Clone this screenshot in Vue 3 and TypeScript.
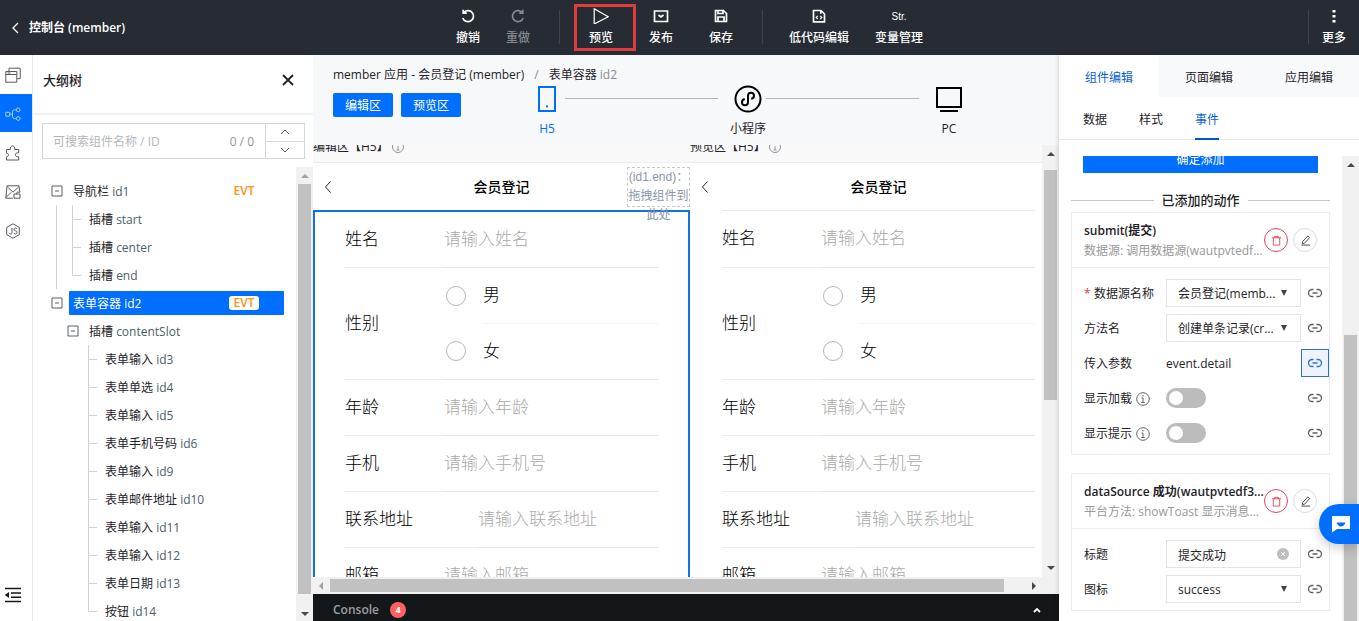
<script setup lang="ts">
import { ref } from 'vue'

interface TreeRow {
  name: string
  id: string
  level: number
  open?: boolean
  last?: boolean
  line?: boolean
  evt?: boolean
}

interface Field {
  key: string
  label: string
  hint: string
  options?: string[]
}

const selectedNode = ref('id2')
const query = ref('')
const toastTitle = ref('提交成功')
const showLoading = ref(false)
const showTip = ref(false)

const tree: TreeRow[] = [
  { name: '导航栏', id: 'id1', level: 0, open: true, evt: true },
  { name: '插槽', id: 'start', level: 1, line: true },
  { name: '插槽', id: 'center', level: 1, line: true },
  { name: '插槽', id: 'end', level: 1, line: true, last: true },
  { name: '表单容器', id: 'id2', level: 0, open: true, evt: true },
  { name: '插槽', id: 'contentSlot', level: 1, open: true },
  { name: '表单输入', id: 'id3', level: 2 },
  { name: '表单单选', id: 'id4', level: 2 },
  { name: '表单输入', id: 'id5', level: 2 },
  { name: '表单手机号码', id: 'id6', level: 2 },
  { name: '表单输入', id: 'id9', level: 2 },
  { name: '表单邮件地址', id: 'id10', level: 2 },
  { name: '表单输入', id: 'id11', level: 2 },
  { name: '表单输入', id: 'id12', level: 2 },
  { name: '表单日期', id: 'id13', level: 2 },
  { name: '按钮', id: 'id14', level: 2, last: true },
]

const fields: Field[] = [
  { key: 'name', label: '姓名', hint: '请输入姓名' },
  { key: 'gender', label: '性别', hint: '', options: ['男', '女'] },
  { key: 'age', label: '年龄', hint: '请输入年龄' },
  { key: 'phone', label: '手机', hint: '请输入手机号' },
  { key: 'address', label: '联系地址', hint: '请输入联系地址' },
  { key: 'mail', label: '邮箱', hint: '请输入邮箱' },
]

const panes = [
  { key: 'edit', title: '编辑区【H5】' },
  { key: 'preview', title: '预览区【H5】' },
]
</script>

<template>
  <div class="app">
    <header class="topbar">
      <a class="back" href="#">
        <svg width="8" height="12" viewBox="0 0 8 12"><path d="M7 1 2 6l5 5" /></svg>
        <span>控制台 (member)</span>
      </a>
      <nav class="tools">
        <button class="tool">
          <svg viewBox="0 0 16 16"><path d="M4.200 4.200A5.500 5.500 0 1 1 2.800 10M3.200 1.800v3.400h3.600" /></svg>
          <span>撤销</span>
        </button>
        <button class="tool dim">
          <svg viewBox="0 0 16 16"><path d="M11.800 4.200A5.500 5.500 0 1 0 13.200 10M12.800 1.800v3.400H9.200" /></svg>
          <span>重做</span>
        </button>
        <i class="sep sep-a"></i>
        <button class="tool wide marked">
          <svg class="play" viewBox="0 0 16 16"><path d="M1.200.8 15.200 8.800 1.200 16z" /></svg>
          <span>预览</span>
        </button>
        <button class="tool wide">
          <svg viewBox="0 0 16 16"><path d="M1.500 3h13v10.500h-13zM5.500 7 8 9l2.500-2" /></svg>
          <span>发布</span>
        </button>
        <button class="tool wide">
          <svg viewBox="0 0 16 16"><path d="M2.500 2.500h8l3 3v8h-11zM5 2.500v3h5v-3M5 13.500V9h6v4.500" /></svg>
          <span>保存</span>
        </button>
        <i class="sep sep-b"></i>
        <button class="tool">
          <svg viewBox="0 0 16 16"><path d="M2.500 2.500h7.500l3.500 3.500v7.800h-11zM9.800 2.500v3.300" /><path class="fine" d="M6.800 7.800 5.200 9.400 6.800 11M9.200 7.800l1.600 1.600L9.200 11" /></svg>
          <span>低代码编辑</span>
        </button>
        <button class="tool">
          <b class="str">Str.</b>
          <span>变量管理</span>
        </button>
      </nav>
      <div class="more-zone">
        <i class="sep"></i>
        <button class="tool">
          <svg class="dots" viewBox="0 0 16 16"><path d="M6.500 2h3v2.500h-3zM6.500 7h3v2.500h-3zM6.500 12h3v2.500h-3z" /></svg>
          <span>更多</span>
        </button>
      </div>
    </header>

    <div class="body">
      <aside class="rail">
        <button aria-label="页面">
          <svg viewBox="0 0 16 16"><path d="M.8 4.500h11v10.700H.8zM.8 7.500h11M2.500 6h3M4 4V1.200h11.200v10.500h-3" /></svg>
        </button>
        <button class="on" aria-label="大纲树">
          <svg viewBox="0 0 16 16"><path d="M.8 6.300h3.900v3.900H.8zM4.700 8.200h2.800M11.300 3.800H9.500q-2 0-2 2v4.800q0 2 2 2h1.800" /><circle cx="13.200" cy="3.800" r="1.900" /><circle cx="13.200" cy="12.500" r="1.900" /></svg>
        </button>
        <button aria-label="组件">
          <svg viewBox="0 0 16 16"><path d="M1.500 4.500h3.800C4.900 2.400 6 1 7.500 1s2.700 1.400 2.200 3.500h4v3.300c-2.200-.3-3.400.7-3.400 2s1.200 2.400 3.400 2V15H1.500v-3.200c2.600 0 2.700-3.600 0-3.600z" /></svg>
        </button>
        <button aria-label="素材">
          <svg viewBox="0 0 16 16"><path d="M8 14.200H.8L2 1.800h12l.8 6.500M2.500 3 8 8.200 13.500 3M1 13.500l5.200-5.200M9 10h6v4.200H9zM11 10l1.500-2 2.300.3" /></svg>
        </button>
        <button aria-label="JS">
          <svg viewBox="0 0 16 16"><path d="M8 .8 14.300 4.400v7.200L8 15.200 1.700 11.600V4.400zM7 5v4.500Q7 11 5.500 11 4.200 11 4 9.800M12 6q-.4-1-1.600-1Q9 5 9 6.400q0 1.100 1.500 1.400 1.500.3 1.500 1.600T10.500 11Q9.200 11 9 9.900" /></svg>
        </button>
        <button class="collapse" aria-label="收起">
          <svg width="18" height="16" viewBox="0 0 18 16"><path d="M1 1.500h16M7 6h10M7 10.200h10M1 14.500h16" /><path class="solid" d="M.8 8 5 5v6z" /></svg>
        </button>
      </aside>

      <section class="outline">
        <div class="outline-head">
          <h2>大纲树</h2>
          <button aria-label="关闭">
            <svg width="12" height="12" viewBox="0 0 12 12"><path d="m1 1 10 10M11 1 1 11" /></svg>
          </button>
        </div>
        <div class="search">
          <input v-model="query" type="text" aria-label="搜索组件" placeholder="可搜索组件名称 / ID" />
          <span class="count">0 / 0</span>
          <div class="stepper">
            <button aria-label="上一个"><svg width="10" height="6" viewBox="0 0 10 6"><path d="m1 5 4-4 4 4" /></svg></button>
            <button aria-label="下一个"><svg width="10" height="6" viewBox="0 0 10 6"><path d="m1 1 4 4 4-4" /></svg></button>
          </div>
        </div>
        <div class="tree-scroll">
          <ul class="tree">
            <li v-for="row in tree" :key="row.id" class="row">
              <i v-for="n in row.level" :key="n" class="indent" :class="{ line: row.line }"></i>
              <button v-if="row.open" class="switch" aria-label="折叠">
                <svg width="12" height="12" viewBox="0 0 12 12"><path d="M1 1h10v10H1zM4 6h4" /></svg>
              </button>
              <i v-else class="leaf" :class="{ last: row.last }"></i>
              <button class="node" :class="{ on: row.id === selectedNode }" @click="selectedNode = row.id">
                <span>{{ row.name }} <em>{{ row.id }}</em></span>
                <b v-if="row.evt">EVT</b>
              </button>
            </li>
          </ul>
          <div class="vbar">
            <svg class="muted" width="8" height="4" viewBox="0 0 8 4"><path d="m0 4 4-4 4 4z" /></svg>
            <i class="thumb"></i>
            <svg width="8" height="4" viewBox="0 0 8 4"><path d="m0 0 4 4 4-4z" /></svg>
          </div>
        </div>
      </section>

      <main class="stage">
        <div class="stage-head">
          <div class="crumbs">
            <span>member 应用 - 会员登记 (member)</span>
            <i>/</i>
            <span>表单容器 <em>id2</em></span>
          </div>
          <div class="modes">
            <button class="primary">编辑区</button>
            <button class="primary">预览区</button>
            <div class="devices">
              <button class="device on">
                <svg width="28" height="28" viewBox="0 0 28 28"><path d="M6 2h16v24H6zM13 21.500h2" /></svg>
                <span>H5</span>
              </button>
              <i class="link-line"></i>
              <button class="device">
                <svg width="28" height="28" viewBox="0 0 28 28"><circle cx="14" cy="14" r="12.500" /><path d="M10.800 14.300a3 3 0 1 0 3.200 3v-6.600a3 3 0 1 1 3.200 3" /></svg>
                <span>小程序</span>
              </button>
              <i class="link-line"></i>
              <button class="device">
                <svg width="28" height="28" viewBox="0 0 28 28"><path d="M2 3h24v19H2zM5 26h18" /></svg>
                <span>PC</span>
              </button>
            </div>
          </div>
        </div>

        <div class="canvas">
          <div class="viewport">
            <div class="panes">
              <article v-for="pane in panes" :key="pane.key" class="pane" :class="pane.key">
                <h3>
                  {{ pane.title }}
                  <svg width="12" height="12" viewBox="0 0 12 12"><circle cx="6" cy="6" r="5.500" /><path d="M6 2.500v1.500M6 5v4M4.500 9h3" /></svg>
                </h3>
                <div class="phone">
                  <div class="navbar">
                    <svg width="8" height="12" viewBox="0 0 8 12"><path d="M6.500.500 1.500 6l5 5.500" /></svg>
                    <strong>会员登记</strong>
                    <div v-if="pane.key === 'edit'" class="slot">(id1.end)：拖拽组件到此处</div>
                  </div>
                  <form class="form" @submit.prevent>
                    <div v-for="f in fields" :key="f.key" class="field" :class="{ tall: f.options }">
                      <template v-if="f.options">
                        <span :id="pane.key + f.key" class="name">{{ f.label }}</span>
                        <div class="choices" role="radiogroup" :aria-labelledby="pane.key + f.key">
                          <label v-for="o in f.options" :key="o">
                            <input type="radio" :name="pane.key + f.key" :value="o" />
                            <span>{{ o }}</span>
                          </label>
                        </div>
                      </template>
                      <template v-else>
                        <label class="name" :for="pane.key + f.key">{{ f.label }}</label>
                        <input :id="pane.key + f.key" class="text" type="text" :placeholder="f.hint" />
                      </template>
                    </div>
                  </form>
                </div>
              </article>
            </div>
            <div class="vbar stage-bar">
              <svg width="8" height="4" viewBox="0 0 8 4"><path d="m0 4 4-4 4 4z" /></svg>
              <i class="thumb"></i>
              <svg width="8" height="4" viewBox="0 0 8 4"><path d="m0 0 4 4 4-4z" /></svg>
            </div>
          </div>
          <div class="hbar">
            <svg class="muted" width="4" height="8" viewBox="0 0 4 8"><path d="m4 0-4 4 4 4z" /></svg>
            <i class="thumb"></i>
            <svg width="4" height="8" viewBox="0 0 4 8"><path d="m0 0 4 4-4 4z" /></svg>
          </div>
        </div>

        <div class="console">
          <strong>Console</strong>
          <b>4</b>
          <button aria-label="展开">
            <svg width="8" height="6" viewBox="0 0 8 6"><path d="m1 5 3-3 3 3" /></svg>
          </button>
        </div>
      </main>

      <aside class="props">
        <nav class="tabs">
          <button class="on">组件编辑</button>
          <button>页面编辑</button>
          <button>应用编辑</button>
        </nav>
        <nav class="subtabs">
          <button>数据</button>
          <button>样式</button>
          <button class="on">事件</button>
        </nav>
        <div class="props-scroll">
          <div class="props-body">
            <button class="confirm">确定添加</button>
            <h4 class="divider">已添加的动作</h4>

            <section class="card">
              <div class="card-head">
                <div class="card-text">
                  <strong>submit(提交)</strong>
                  <span>数据源: 调用数据源(wautpvtedf...</span>
                </div>
                <button class="round danger" aria-label="删除"><svg viewBox="0 0 12 12"><path d="M1 3h10M4 3V1.500h4V3M2.500 3v8h7V3" /></svg></button>
                <button class="round" aria-label="编辑"><svg viewBox="0 0 12 12"><path d="M2.500 9.500 3 7l5.500-6 2 1.800L5 8.900zM1.500 11h9.500" /></svg></button>
              </div>
              <div class="card-body">
                <div class="prop">
                  <label for="source"><u>*</u>数据源名称</label>
                  <div class="pick">
                    <select id="source"><option>会员登记(memb...</option></select>
                    <svg width="6" height="6" viewBox="0 0 6 6"><path d="M0 0h6L3 6z" /></svg>
                  </div>
                  <button class="bind" aria-label="绑定"><svg viewBox="0 0 16 10"><path d="M6.500 1.500H5a3.500 3.500 0 0 0 0 7h1.500M9.500 1.500H11a3.500 3.500 0 0 1 0 7H9.500M5.500 5h5" /></svg></button>
                </div>
                <div class="prop">
                  <label for="method">方法名</label>
                  <div class="pick">
                    <select id="method"><option>创建单条记录(cr...</option></select>
                    <svg width="6" height="6" viewBox="0 0 6 6"><path d="M0 0h6L3 6z" /></svg>
                  </div>
                  <button class="bind" aria-label="绑定"><svg viewBox="0 0 16 10"><path d="M6.500 1.500H5a3.500 3.500 0 0 0 0 7h1.500M9.500 1.500H11a3.500 3.500 0 0 1 0 7H9.500M5.500 5h5" /></svg></button>
                </div>
                <div class="prop">
                  <span class="cap">传入参数</span>
                  <span class="value">event.detail</span>
                  <button class="bind on" aria-label="绑定"><svg viewBox="0 0 16 10"><path d="M6.500 1.500H5a3.500 3.500 0 0 0 0 7h1.500M9.500 1.500H11a3.500 3.500 0 0 1 0 7H9.500M5.500 5h5" /></svg></button>
                </div>
                <div class="prop">
                  <label for="loading">显示加载<svg class="info" viewBox="0 0 14 14"><circle cx="7" cy="7" r="6.300" /><path d="M7 3v1.500M5.500 6H7v4.500M5.300 10.500h3.400" /></svg></label>
                  <div class="flip"><input id="loading" v-model="showLoading" class="toggle" type="checkbox" /></div>
                  <button class="bind" aria-label="绑定"><svg viewBox="0 0 16 10"><path d="M6.500 1.500H5a3.500 3.500 0 0 0 0 7h1.500M9.500 1.500H11a3.500 3.500 0 0 1 0 7H9.500M5.500 5h5" /></svg></button>
                </div>
                <div class="prop">
                  <label for="tip">显示提示<svg class="info" viewBox="0 0 14 14"><circle cx="7" cy="7" r="6.300" /><path d="M7 3v1.500M5.500 6H7v4.500M5.300 10.500h3.400" /></svg></label>
                  <div class="flip"><input id="tip" v-model="showTip" class="toggle" type="checkbox" /></div>
                  <button class="bind" aria-label="绑定"><svg viewBox="0 0 16 10"><path d="M6.500 1.500H5a3.500 3.500 0 0 0 0 7h1.500M9.500 1.500H11a3.500 3.500 0 0 1 0 7H9.500M5.500 5h5" /></svg></button>
                </div>
              </div>
            </section>

            <section class="card">
              <div class="card-head">
                <div class="card-text">
                  <strong>dataSource 成功(wautpvtedf3...</strong>
                  <span>平台方法: showToast 显示消息...</span>
                </div>
                <button class="round danger" aria-label="删除"><svg viewBox="0 0 12 12"><path d="M1 3h10M4 3V1.500h4V3M2.500 3v8h7V3" /></svg></button>
                <button class="round" aria-label="编辑"><svg viewBox="0 0 12 12"><path d="M2.500 9.500 3 7l5.500-6 2 1.800L5 8.900zM1.500 11h9.500" /></svg></button>
              </div>
              <div class="card-body">
                <div class="prop">
                  <label for="title">标题</label>
                  <div class="pick">
                    <input id="title" v-model="toastTitle" type="text" />
                    <button class="clear" aria-label="清空" @click="toastTitle = ''"><svg width="12" height="12" viewBox="0 0 12 12"><circle cx="6" cy="6" r="6" /><path d="m4 4 4 4M8 4 4 8" /></svg></button>
                  </div>
                  <button class="bind" aria-label="绑定"><svg viewBox="0 0 16 10"><path d="M6.500 1.500H5a3.500 3.500 0 0 0 0 7h1.500M9.500 1.500H11a3.500 3.500 0 0 1 0 7H9.500M5.500 5h5" /></svg></button>
                </div>
                <div class="prop">
                  <label for="icon">图标</label>
                  <div class="pick">
                    <select id="icon"><option>success</option></select>
                    <svg width="6" height="6" viewBox="0 0 6 6"><path d="M0 0h6L3 6z" /></svg>
                  </div>
                  <button class="bind" aria-label="绑定"><svg viewBox="0 0 16 10"><path d="M6.500 1.500H5a3.500 3.500 0 0 0 0 7h1.500M9.500 1.500H11a3.500 3.500 0 0 1 0 7H9.500M5.500 5h5" /></svg></button>
                </div>
              </div>
            </section>
          </div>
          <div class="vbar props-bar">
            <svg width="8" height="4" viewBox="0 0 8 4"><path d="m0 4 4-4 4 4z" /></svg>
            <i class="thumb"></i>
          </div>
        </div>
      </aside>
    </div>

    <button class="chat" aria-label="客服">
      <svg width="18" height="18" viewBox="0 0 18 18"><path d="M0 1h18v13H5l-5 3.500z" /><path class="smile" d="M4.500 7.500h9q-1.500 4-4.500 4t-4.500-4z" /></svg>
    </button>
  </div>
</template>

<style>
body {
  margin: 0;
}
</style>

<style scoped>
.app {
  position: relative;
  display: flex;
  flex-direction: column;
  height: 100vh;
  overflow: hidden;
  background: #fff;
  color: #1f2329;
  font-family: "Open Sans", "Noto Sans CJK SC", sans-serif;
  font-size: 12px;
  line-height: 18px;
}
.app *,
.app *::before {
  box-sizing: border-box;
}
button,
input,
select {
  margin: 0;
  padding: 0;
  border: 0;
  background: none;
  color: inherit;
  font: inherit;
}
input,
select {
  min-width: 0;
  outline: none;
}
em,
i {
  font-style: normal;
}
svg {
  display: block;
  flex: none;
  fill: none;
  stroke: currentColor;
}
h2,
h3,
h4,
ul {
  margin: 0;
  padding: 0;
}

/* top bar */
.topbar {
  display: flex;
  flex: none;
  height: 55px;
  background: #272b33;
  color: #fff;
}
.back {
  display: flex;
  align-items: center;
  width: 160px;
  padding-left: 11px;
  gap: 10px;
  color: #fff;
  font-weight: 600;
  text-decoration: none;
}
.back svg {
  stroke-width: 1.300;
}
.tools {
  display: flex;
  flex: 1;
  justify-content: center;
}
.tool {
  position: relative;
  display: flex;
  flex-direction: column;
  align-items: center;
  gap: 5px;
  padding: 8px 13px 0;
  font-weight: 500;
  white-space: nowrap;
}
.tool.wide {
  padding: 8px 18px 0;
}
.tool svg {
  width: 16px;
  height: 16px;
  stroke-width: 1.700;
}
.tool .play {
  stroke-width: 1.200;
}
.fine {
  stroke-width: 1.200;
}
.tool .dots {
  fill: currentColor;
  stroke: none;
}
.dim {
  color: #85888d;
}
.marked::before {
  content: "";
  position: absolute;
  top: 4px;
  right: -5px;
  left: 3px;
  height: 47px;
  border: 3px solid #e23b3b;
}
.str {
  height: 16px;
  font-family: "Liberation Sans", sans-serif;
  font-size: 10px;
  font-weight: 400;
}
.sep {
  width: 1px;
  height: 34px;
  margin-top: 10px;
  background: #3f444c;
}
.sep-a {
  margin-right: 11px;
  margin-left: 16px;
}
.sep-b {
  margin-right: 13px;
  margin-left: 11px;
}
.more-zone {
  display: flex;
  justify-content: flex-end;
  width: 140px;
}

/* left rail */
.body {
  display: flex;
  flex: 1;
  min-height: 0;
}
.rail {
  display: flex;
  flex-direction: column;
  width: 33px;
  gap: 1px;
  padding-bottom: 8px;
  border-right: 1px solid #e6e7ea;
}
.rail button {
  display: flex;
  align-items: center;
  height: 38px;
  padding: 2px 0 0 5px;
  color: #555a61;
}
.rail svg {
  width: 16px;
  height: 16px;
}
.rail .on {
  background: #006eff;
  color: #9bd0ff;
}
.rail .collapse {
  margin-top: auto;
  padding: 0 0 0 4px;
  height: 36px;
  color: #15181c;
}
.rail .collapse svg {
  width: 18px;
  stroke-width: 1.600;
}
.solid {
  fill: currentColor;
  stroke: none;
}

/* outline panel */
.outline {
  display: flex;
  flex-direction: column;
  width: 280px;
}
.outline-head {
  display: flex;
  flex: none;
  align-items: center;
  justify-content: space-between;
  height: 60px;
  padding: 0 19px 8px 10px;
  border-bottom: 2px solid #f0f1f3;
}
.outline-head h2 {
  font-size: 13px;
  font-weight: 500;
}
.outline-head svg {
  stroke-width: 1.800;
}
.search {
  display: flex;
  flex: none;
  align-items: center;
  height: 36px;
  margin: 8px 8px 8px 9px;
  border: 1px solid #d3d6da;
  color: #8f949b;
}
.search input {
  flex: 1;
  padding: 2px 0 0 10px;
}
.search input::placeholder {
  color: #b4b7bb;
}
.count {
  padding: 2px 11px 0 0;
}
.stepper {
  display: flex;
  flex-direction: column;
  width: 39px;
  height: 100%;
  border-left: 1px solid #d3d6da;
  color: #555a61;
}
.stepper button {
  display: flex;
  flex: 1;
  align-items: center;
  justify-content: center;
}
.stepper button + button {
  border-top: 1px solid #d3d6da;
}
.tree-scroll {
  display: flex;
  flex: 1;
  min-height: 0;
}
.tree {
  flex: 1;
  padding: 10px 12px 0 16px;
  overflow: hidden;
  list-style: none;
}
.row {
  display: flex;
  align-items: center;
  height: 28px;
}
.indent,
.leaf,
.switch {
  flex: none;
  width: 16px;
  height: 28px;
}
.indent.line:first-child {
  background: linear-gradient(#d0d3d6, #d0d3d6) 7px 0 / 1px 28px no-repeat;
}
.leaf {
  background:
    linear-gradient(#d0d3d6, #d0d3d6) 7px 0 / 1px 28px no-repeat,
    linear-gradient(#d0d3d6, #d0d3d6) 7px 14px / 9px 1px no-repeat;
}
.leaf.last {
  background-size: 1px 14px, 9px 1px;
}
.switch {
  padding: 0 2px;
  color: #5b6067;
}
.node {
  display: flex;
  flex: 1;
  align-items: center;
  justify-content: space-between;
  height: 24px;
  margin-left: 4px;
  padding: 0 25px 0 4px;
  border-radius: 1px;
  text-align: left;
  white-space: nowrap;
}
.node span {
  padding-top: 2px;
}
.node em {
  color: #4b6068;
}
.node b {
  width: 30px;
  border-radius: 3px;
  background: #fff;
  color: #ff9114;
  font-weight: 600;
  line-height: 14px;
  text-align: center;
}
.node.on {
  background: #006eff;
  color: #fff;
}
.node.on em {
  color: #fff;
}

/* scroll bars */
.vbar,
.hbar {
  display: flex;
  flex: none;
  align-items: center;
  background: #f1f1f1;
  color: #45484c;
}
.vbar {
  flex-direction: column;
  width: 17px;
  padding: 7px 0 5px;
}
.vbar svg,
.hbar svg {
  fill: currentColor;
  stroke: none;
}
.muted {
  color: #a3a3a3;
}
.thumb {
  background: #c1c1c1;
}
.vbar .thumb {
  flex: 1;
  width: 13px;
  margin: 6px 0 18px;
}

/* stage */
.stage {
  display: flex;
  flex: 1;
  flex-direction: column;
  min-width: 0;
}
.stage-head {
  flex: none;
  height: 90px;
  padding: 11px 92px 0 20px;
  background: #f7f8fa;
}
.crumbs {
  display: flex;
  gap: 10px;
  white-space: nowrap;
}
.crumbs i,
.crumbs em {
  color: #878c94;
}
.modes {
  display: flex;
  align-items: flex-start;
  gap: 8px;
}
.primary {
  width: 60px;
  height: 24px;
  margin-top: 9px;
  padding-top: 2px;
  border-radius: 2px;
  background: #006eff;
  color: #fff;
}
.devices {
  display: flex;
  flex: 1;
  margin-left: 60px;
}
.device {
  display: flex;
  flex-direction: column;
  align-items: center;
  width: 36px;
  gap: 7px;
  white-space: nowrap;
}
.device svg {
  margin-top: 1px;
  color: #000;
  stroke-width: 2;
}
.device.on,
.device.on svg {
  color: #006eff;
}
.link-line {
  flex: 1;
  height: 1px;
  margin: 14px 12px 0 0;
  background: #b2b5b9;
}
.canvas {
  display: flex;
  flex: 1;
  flex-direction: column;
  min-height: 0;
}
.viewport {
  display: flex;
  flex: 1;
  min-height: 0;
}
.panes {
  display: flex;
  flex: 1;
  align-items: flex-start;
  overflow: hidden;
  background: #f9f9f9;
}
.pane {
  flex: none;
  width: 377px;
  margin-top: -8px;
}
.pane h3 {
  display: flex;
  align-items: center;
  height: 26px;
  gap: 3px;
  padding-bottom: 6px;
  border-bottom: 1px solid #ebebeb;
  font-size: 12px;
  font-weight: 400;
}
.pane h3 svg {
  color: #8d949c;
}
.phone {
  background: #fff;
}
.navbar {
  position: relative;
  display: flex;
  align-items: center;
  height: 47px;
  padding-left: 11px;
}
.navbar strong {
  flex: 1;
  padding-right: 19px;
  color: #000;
  font-size: 14px;
  font-weight: 500;
  text-align: center;
}
.slot {
  position: absolute;
  top: 4px;
  right: 0;
  z-index: 1;
  width: 63px;
  height: 40px;
  border: 1px dashed #c3cad3;
  color: #8996aa;
  line-height: 19px;
  text-align: center;
  font-family: "Liberation Sans", "Noto Sans CJK SC", sans-serif;
}
.form {
  padding: 0 30px;
  border: 2px solid transparent;
}
.edit .form {
  border-color: #1371e0;
}
.preview .form {
  border-top: 0;
}
.field {
  display: flex;
  height: 56px;
  color: #000;
  font-size: 17px;
  font-weight: 300;
}
.preview .field:first-child {
  height: 58px;
  border-top: 1px solid #e9e9e9;
}
.field.tall {
  height: 112px;
}
.name {
  display: flex;
  align-items: center;
  padding: 0 65px 2px 0;
  border-bottom: 1px solid #ededed;
  white-space: nowrap;
}
.text {
  flex: 1;
  padding-bottom: 2px;
  border-bottom: 1px solid #e3e3e3;
}
.text::placeholder {
  color: #aaa;
}
.choices {
  display: flex;
  flex: 1;
  flex-direction: column;
  border-bottom: 1px solid #e3e3e3;
}
.choices label {
  display: flex;
  flex: 1;
  align-items: center;
  gap: 17px;
  padding-left: 2px;
}
.choices input {
  flex: none;
  width: 20px;
  height: 20px;
  border: 1px solid #b5b5b5;
  border-radius: 50%;
  appearance: none;
}
.choices input:checked {
  border: 6px solid #006eff;
}
.choices span {
  display: flex;
  flex: 1;
  align-items: center;
  height: 100%;
}
.choices label:first-child span {
  border-bottom: 1px solid #f4f4f4;
}
.stage-bar {
  padding-bottom: 7px;
}
.stage-bar .thumb {
  flex: 0 0 55%;
  margin: 14px 0 auto;
}
.hbar {
  height: 17px;
  padding: 0 23px 0 6px;
}
.hbar .thumb {
  width: 94%;
  height: 13px;
  margin: 0 auto 0 7px;
}
.console {
  display: flex;
  flex: none;
  align-items: center;
  height: 27px;
  gap: 11px;
  padding: 4px 18px 0 20px;
  background: #14171a;
  color: #9c9ea1;
}
.console strong {
  font-weight: 600;
}
.console b {
  width: 16px;
  border-radius: 8px;
  background: #ff6161;
  color: #fff;
  font-size: 9px;
  line-height: 16px;
  text-align: center;
}
.console button {
  margin-left: auto;
  color: #fff;
}
.console svg {
  stroke-width: 1.800;
}

/* properties */
.props {
  z-index: 1;
  display: flex;
  flex-direction: column;
  width: 300px;
  background: #fff;
  box-shadow: -1px 0 4px rgba(0, 0, 0, 0.15);
}
.tabs {
  display: flex;
  flex: none;
  height: 42px;
}
.tabs button {
  flex: 1;
  padding-top: 4px;
  background: #f8f9fa;
}
.tabs .on {
  background: #fff;
  color: #0a5fd6;
}
.subtabs {
  display: flex;
  flex: none;
  height: 43px;
  gap: 32px;
  padding-left: 24px;
  border-bottom: 1px solid #e7e8ea;
}
.subtabs button {
  height: 43px;
  padding-top: 4px;
  border-bottom: 2px solid transparent;
}
.subtabs .on {
  border-color: #0052d9;
  color: #0a5fd6;
}
.props-scroll {
  display: flex;
  flex: 1;
  min-height: 0;
  margin-top: 16px;
}
.props-body {
  display: flex;
  flex: 1;
  flex-direction: column;
  min-width: 0;
  padding: 0 12px;
  overflow: hidden;
}
.confirm {
  flex: none;
  height: 28px;
  margin: -11px 12px 0;
  padding-top: 2px;
  background: #006eff;
  color: #fff;
}
.divider {
  display: flex;
  flex: none;
  align-items: center;
  gap: 8px;
  margin: 18px 0 3px;
  font-size: 13px;
  font-weight: 500;
}
.divider::before,
.divider::after {
  content: "";
  flex: 1;
  height: 1px;
  background: #c6c8cb;
}
.card {
  flex: none;
  margin-bottom: 18px;
  border: 1px solid #ececee;
}
.card-head {
  display: flex;
  align-items: center;
  height: 55px;
  gap: 5px;
  padding-right: 12px;
  border-bottom: 1px solid #ececee;
}
.card-text {
  display: flex;
  flex: 1;
  flex-direction: column;
  gap: 2px;
  min-width: 0;
  padding: 2px 0 0 12px;
  white-space: nowrap;
}
.card-text strong {
  font-weight: 600;
}
.card-text span {
  color: #999;
}
.round {
  display: flex;
  flex: none;
  align-items: center;
  justify-content: center;
  width: 24px;
  height: 24px;
  border: 1px solid #dcdee0;
  border-radius: 50%;
  color: #3b3f45;
}
.round svg {
  width: 11px;
  height: 11px;
}
.round.danger {
  border-color: #e5455b;
  color: #e5455b;
}
.card-body {
  display: flex;
  flex-direction: column;
  gap: 7px;
  padding: 11px 0 7px 12px;
}
.prop {
  display: flex;
  align-items: center;
  height: 28px;
}
.prop label,
.cap {
  display: flex;
  align-items: center;
  width: 82px;
  padding-top: 2px;
  white-space: nowrap;
}
.prop u {
  width: 10px;
  color: #e03a3a;
  text-decoration: none;
}
.info {
  width: 14px;
  height: 14px;
  margin-left: 4px;
  color: #5f646b;
}
.pick {
  display: flex;
  flex: 1;
  align-items: center;
  height: 28px;
  min-width: 0;
  padding-right: 13px;
  border: 1px solid #e3e4e6;
}
.pick select,
.pick input {
  flex: 1;
  height: 26px;
  padding: 2px 0 0 11px;
  appearance: none;
}
.pick > svg {
  fill: #3f444b;
  stroke: none;
}
.clear {
  margin-right: -2px;
}
.clear svg {
  fill: #bdbdbd;
  stroke: none;
}
.clear path {
  stroke: #fff;
}
.value,
.flip {
  display: flex;
  flex: 1;
}
.value {
  padding-top: 2px;
}
.toggle {
  display: flex;
  align-items: center;
  width: 40px;
  height: 20px;
  padding: 0 3px;
  border-radius: 10px;
  background: #bcbcbc;
  appearance: none;
}
.toggle::before {
  content: "";
  width: 14px;
  height: 14px;
  border-radius: 50%;
  background: #fff;
}
.toggle:checked {
  justify-content: flex-end;
  background: #006eff;
}
.bind {
  display: flex;
  flex: none;
  align-items: center;
  justify-content: center;
  width: 28px;
  height: 28px;
  color: #5b6067;
}
.bind svg {
  width: 16px;
  height: 10px;
  stroke-width: 1.300;
}
.bind.on {
  border: 1px solid #2d6fd2;
  background: #eef3fb;
  color: #2d6fd2;
}
.props-bar .thumb {
  flex: 1;
  margin: 168px 0 -5px;
}

/* support button */
.chat {
  position: absolute;
  right: 0;
  bottom: 77px;
  z-index: 2;
  display: flex;
  align-items: center;
  width: 40px;
  height: 40px;
  padding-left: 13px;
  border-radius: 20px 0 0 20px;
  background: #006eff;
  box-shadow: 0 4px 12px rgba(0, 0, 0, 0.2);
}
.chat svg {
  fill: #fff;
  stroke: none;
}
.chat .smile {
  fill: #006eff;
}
</style>
